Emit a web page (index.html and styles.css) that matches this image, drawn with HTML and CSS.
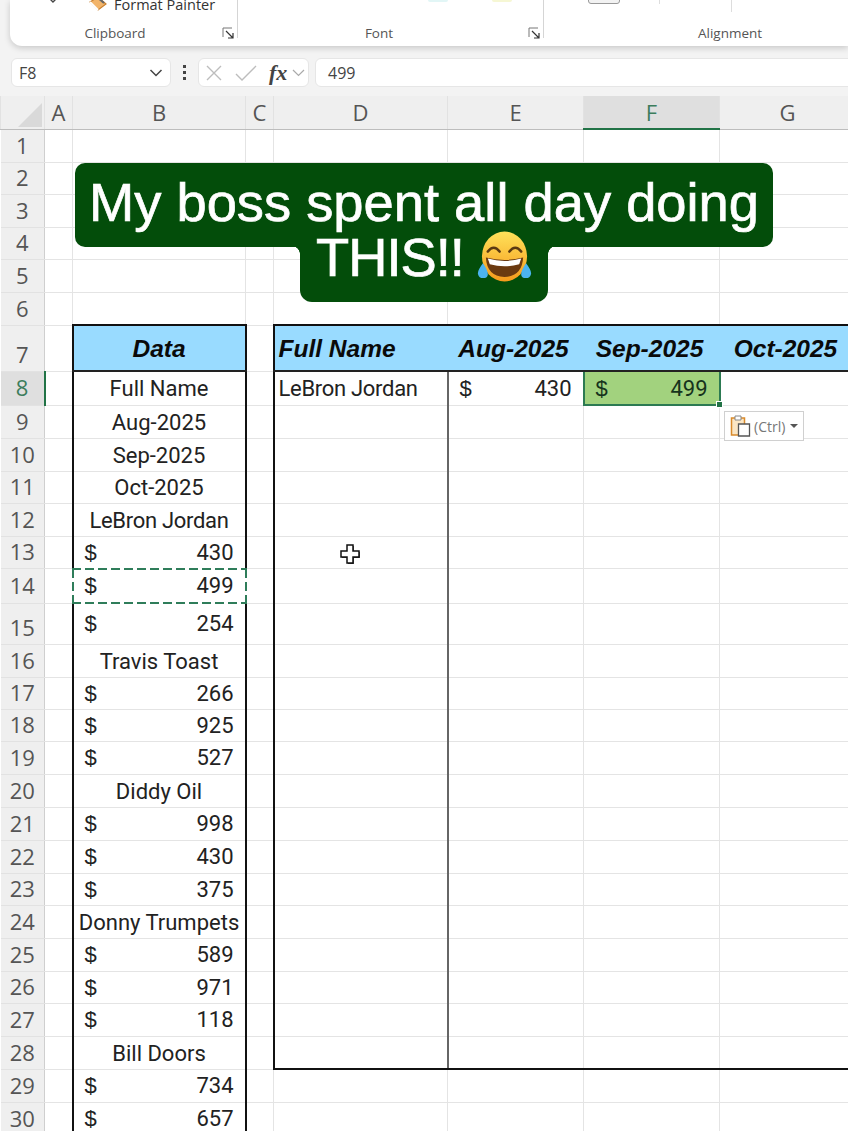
FILE: index.html
```html
<!DOCTYPE html>
<html lang="en">
<head>
    <meta charset="UTF-8">
    <title>Excel - My boss spent all day doing THIS</title>
    <link rel="stylesheet" href="styles.css">
</head>
<body>
    <div class="app">
        <!-- ribbon, top is cut off -->
        <div class="ribbon">
            <div class="group group-clipboard">
                <div class="group-top">
                    <svg class="chevron" width="14" height="8" viewBox="0 0 14 8"><path d="M2 0l5 5 5-5" fill="none" stroke="#444" stroke-width="1.4"/></svg>
                    <svg class="painter" width="22" height="16" viewBox="0 0 22 16"><path d="M3 5l8-5 8 7-8 6z" fill="#f2b46a" stroke="#c9802f" stroke-width="1.2"/><path d="M3 5l8 8" stroke="#fff" stroke-width="2"/><path d="M10 0l7 6" stroke="#666" stroke-width="2"/></svg>
                    <span class="painter-label">Format Painter</span>
                </div>
                <div class="group-label">Clipboard</div>
                <svg class="launcher" width="12" height="12" viewBox="0 0 12 12"><path d="M10 1H1v9" fill="none" stroke="#777"/><path d="M4 4l7 7M11 6v5H6" fill="none" stroke="#333" stroke-width="1.2"/></svg>
            </div>
            <div class="group group-font">
                <div class="group-top">
                    <span class="swatch swatch-blue"></span>
                    <span class="swatch swatch-yellow"></span>
                </div>
                <div class="group-label">Font</div>
                <svg class="launcher" width="12" height="12" viewBox="0 0 12 12"><path d="M10 1H1v9" fill="none" stroke="#777"/><path d="M4 4l7 7M11 6v5H6" fill="none" stroke="#333" stroke-width="1.2"/></svg>
            </div>
            <div class="group group-align">
                <div class="group-top">
                    <span class="mini-btn"></span>
                    <span class="tick tick-one"></span>
                    <span class="tick tick-two"></span>
                </div>
                <div class="group-label">Alignment</div>
            </div>
        </div>

        <!-- formula bar -->
        <div class="formula-bar">
            <div class="box name-box">
                <span>F8</span>
                <svg width="14" height="8" viewBox="0 0 14 8"><path d="M1.5 1l5.5 5.5L12.500 1" fill="none" stroke="#444" stroke-width="1.500"/></svg>
            </div>
            <div class="dots"><i></i><i></i><i></i></div>
            <div class="box fx-box">
                <svg width="18" height="18" viewBox="0 0 18 18"><path d="M2 2l14 14M16 2L2 16" fill="none" stroke="#bdbdbd" stroke-width="1.400"/></svg>
                <svg width="22" height="18" viewBox="0 0 22 18"><path d="M1 10l6 6L21 2" fill="none" stroke="#bdbdbd" stroke-width="1.400"/></svg>
                <span class="fx">fx</span>
                <svg width="13" height="8" viewBox="0 0 13 8"><path d="M1 1l5.500 5.500L12 1" fill="none" stroke="#aaa" stroke-width="1.200"/></svg>
            </div>
            <div class="box value-box">499</div>
        </div>

        <!-- sheet -->
        <div class="sheet">
            <table class="grid">
                <colgroup>
                    <col class="c-row"><col class="c-a"><col class="c-b"><col class="c-c"><col class="c-d"><col class="c-e"><col class="c-f"><col class="c-g">
                </colgroup>
                <thead>
                    <tr class="h33">
                        <th class="corner"><svg width="28" height="28" viewBox="0 0 28 28"><path d="M26 2v24H2z" fill="#d9d9d9"/></svg></th>
                        <th>A</th><th>B</th><th>C</th><th>D</th><th>E</th><th class="col-on">F</th><th>G</th>
                    </tr>
                </thead>
                <tbody>
                    <tr class="h33"><th>1</th><td></td><td></td><td></td><td></td><td></td><td></td><td></td></tr>
                    <tr class="h32"><th>2</th><td></td><td></td><td></td><td></td><td></td><td></td><td></td></tr>
                    <tr class="h33"><th>3</th><td></td><td></td><td></td><td></td><td></td><td></td><td></td></tr>
                    <tr class="h32"><th>4</th><td></td><td></td><td></td><td></td><td></td><td></td><td></td></tr>
                    <tr class="h33"><th>5</th><td></td><td></td><td></td><td></td><td></td><td></td><td></td></tr>
                    <tr class="h33"><th>6</th><td></td><td></td><td></td><td></td><td></td><td></td><td></td></tr>
                    <tr class="h46 head-row">
                        <th class="low">7</th><td></td>
                        <td class="hd hd-data">Data</td><td></td>
                        <td class="hd hd-first">Full Name</td>
                        <td class="hd">Aug-2025</td>
                        <td class="hd">Sep-2025</td>
                        <td class="hd hd-last">Oct-2025</td>
                    </tr>
                    <tr class="h34">
                        <th class="row-on">8</th><td></td>
                        <td class="data">Full Name</td><td></td>
                        <td class="t-d tight">LeBron Jordan</td>
                        <td class="t-e"><div class="money"><span>$</span><span>430</span></div></td>
                        <td class="sel"><div class="money"><span>$</span><span>499</span></div><span class="handle"></span></td>
                        <td class="t-g"></td>
                    </tr>
                    <tr class="h33"><th>9</th><td></td><td class="data">Aug-2025</td><td></td><td class="t-d"></td><td></td><td></td><td class="t-g"></td></tr>
                    <tr class="h33"><th>10</th><td></td><td class="data">Sep-2025</td><td></td><td class="t-d"></td><td></td><td></td><td class="t-g"></td></tr>
                    <tr class="h32"><th>11</th><td></td><td class="data">Oct-2025</td><td></td><td class="t-d"></td><td></td><td></td><td class="t-g"></td></tr>
                    <tr class="h33"><th>12</th><td></td><td class="data tight">LeBron Jordan</td><td></td><td class="t-d"></td><td></td><td></td><td class="t-g"></td></tr>
                    <tr class="h32"><th>13</th><td></td><td class="data"><div class="money"><span>$</span><span>430</span></div></td><td></td><td class="t-d"></td><td></td><td></td><td class="t-g"></td></tr>
                    <tr class="h35"><th>14</th><td></td><td class="data ants"><div class="money"><span>$</span><span>499</span></div></td><td></td><td class="t-d"></td><td></td><td></td><td class="t-g"></td></tr>
                    <tr class="h41"><th class="low">15</th><td></td><td class="data"><div class="money"><span>$</span><span>254</span></div></td><td></td><td class="t-d"></td><td></td><td></td><td class="t-g"></td></tr>
                    <tr class="h33"><th>16</th><td></td><td class="data">Travis Toast</td><td></td><td class="t-d"></td><td></td><td></td><td class="t-g"></td></tr>
                    <tr class="h32"><th>17</th><td></td><td class="data"><div class="money"><span>$</span><span>266</span></div></td><td></td><td class="t-d"></td><td></td><td></td><td class="t-g"></td></tr>
                    <tr class="h32"><th>18</th><td></td><td class="data"><div class="money"><span>$</span><span>925</span></div></td><td></td><td class="t-d"></td><td></td><td></td><td class="t-g"></td></tr>
                    <tr class="h33"><th>19</th><td></td><td class="data"><div class="money"><span>$</span><span>527</span></div></td><td></td><td class="t-d"></td><td></td><td></td><td class="t-g"></td></tr>
                    <tr class="h33"><th>20</th><td></td><td class="data">Diddy Oil</td><td></td><td class="t-d"></td><td></td><td></td><td class="t-g"></td></tr>
                    <tr class="h33"><th>21</th><td></td><td class="data"><div class="money"><span>$</span><span>998</span></div></td><td></td><td class="t-d"></td><td></td><td></td><td class="t-g"></td></tr>
                    <tr class="h33"><th>22</th><td></td><td class="data"><div class="money"><span>$</span><span>430</span></div></td><td></td><td class="t-d"></td><td></td><td></td><td class="t-g"></td></tr>
                    <tr class="h32"><th>23</th><td></td><td class="data"><div class="money"><span>$</span><span>375</span></div></td><td></td><td class="t-d"></td><td></td><td></td><td class="t-g"></td></tr>
                    <tr class="h33"><th>24</th><td></td><td class="data">Donny Trumpets</td><td></td><td class="t-d"></td><td></td><td></td><td class="t-g"></td></tr>
                    <tr class="h33"><th>25</th><td></td><td class="data"><div class="money"><span>$</span><span>589</span></div></td><td></td><td class="t-d"></td><td></td><td></td><td class="t-g"></td></tr>
                    <tr class="h32"><th>26</th><td></td><td class="data"><div class="money"><span>$</span><span>971</span></div></td><td></td><td class="t-d"></td><td></td><td></td><td class="t-g"></td></tr>
                    <tr class="h33"><th>27</th><td></td><td class="data"><div class="money"><span>$</span><span>118</span></div></td><td></td><td class="t-d"></td><td></td><td></td><td class="t-g"></td></tr>
                    <tr class="h33 last-row"><th>28</th><td></td><td class="data">Bill Doors</td><td></td><td class="t-d"></td><td></td><td></td><td class="t-g"></td></tr>
                    <tr class="h33"><th>29</th><td></td><td class="data"><div class="money"><span>$</span><span>734</span></div></td><td></td><td></td><td></td><td></td><td></td></tr>
                    <tr class="h33"><th>30</th><td></td><td class="data"><div class="money"><span>$</span><span>657</span></div></td><td></td><td></td><td></td><td></td><td></td></tr>
                </tbody>
            </table>

            <!-- things floating over the grid -->
            <div class="caption">
                <div class="cap-line cap-one">My boss spent all day doing</div>
                <div class="cap-line cap-two"><span class="cap-word">THIS!!</span>
                    <svg class="emoji" width="55" height="51" viewBox="0 0 56 52">
                        <defs>
                            <linearGradient id="face" x1="0" y1="0" x2="0" y2="1">
                                <stop offset="0" stop-color="#ffe25a"/>
                                <stop offset="1" stop-color="#f59a1c"/>
                            </linearGradient>
                        </defs>
                        <ellipse cx="28" cy="26" rx="23" ry="25.500" fill="url(#face)"/>
                        <path d="M11 21q6-8 12 0M33 21q6-8 12 0" fill="none" stroke="#5b3a12" stroke-width="2.600" stroke-linecap="round"/>
                        <path d="M9 27q19 5 38 0q-1 19-19 20q-18-1-19-20z" fill="#6b3a10"/>
                        <path d="M11 28q17 5 34 0l-2 6q-15 4-30 0z" fill="#fff"/>
                        <path d="M6 33q-6 8-5 11q1 4 5 4q5 0 5-4q0-4-5-11zM50 33q6 8 5 11q-1 4-5 4q-5 0-5-4q0-4 5-11z" fill="#4cb4ee"/>
                    </svg>
                </div>
            </div>

            <div class="paste-tag">
                <svg width="22" height="24" viewBox="0 0 22 24"><path d="M1.500 4h13v17h-13z" fill="#fbe6c4" stroke="#d98a2b" stroke-width="1.500"/><path d="M5 2h6v4H5z" fill="#fff" stroke="#888"/><path d="M8.500 10h11v12h-11z" fill="#fff" stroke="#555" stroke-width="1.300"/></svg>
                <span>(Ctrl)</span>
                <i class="caret"></i>
            </div>

            <svg class="cursor" width="24" height="24" viewBox="0 0 24 24"><path d="M9 3h6v6h6v6h-6v6H9v-6H3V9h6z" fill="#333" transform="translate(.8 1)"/><path d="M9 3h6v6h6v6h-6v6H9v-6H3V9h6z" fill="#fff" stroke="#111" stroke-width="1.500"/></svg>
        </div>
    </div>
</body>
</html>
```
FILE: styles.css
```css
* {
    box-sizing: border-box;
}
body {
    margin: 0;
    background-color: #f3f3f3;
    font-family: "Open Sans", "Noto Sans", sans-serif;
    color: #222;
}
.app {
    width: 848px;
    height: 1131px;
    overflow: hidden;
}

/* ribbon */
.ribbon {
    display: flex;
    height: 46px;
    margin-left: 10px;
    padding-bottom: 8px;
    background-color: #fff;
    border-bottom-left-radius: 12px;
    box-shadow: 0 2px 6px rgba(0, 0, 0, 0.18);
}
.group {
    position: relative;
    display: flex;
    flex-direction: column;
    border-right: 1px solid #d5d5d5;
}
.group-clipboard {
    width: 228px;
}
.group-font {
    width: 306px;
}
.group-align {
    flex: 1;
    border-right: none;
}
.group-top {
    position: relative;
    flex: none;
    height: 25px;
}
.group-label {
    flex: none;
    font-size: 13.5px;
    line-height: 16px;
    color: #555;
    text-align: center;
}
.group-clipboard .group-label {
    margin-left: -17px;
}
.group-font .group-label {
    margin-right: 23px;
}
.group-align .group-label {
    text-align: left;
    padding-left: 154px;
}
.chevron {
    position: absolute;
    left: 36px;
    top: -3px;
}
.painter {
    position: absolute;
    left: 77px;
    top: -3px;
}
.painter-label {
    position: absolute;
    left: 104px;
    top: -5px;
    font-size: 14.5px;
    line-height: 20px;
    color: #333;
    white-space: nowrap;
}
.launcher {
    position: absolute;
    right: 3px;
    bottom: -1px;
}
.swatch {
    position: absolute;
    top: -2px;
    width: 20px;
    height: 4px;
    border-radius: 3px;
}
.swatch-blue {
    left: 190px;
    background-color: #e2f6f6;
}
.swatch-yellow {
    left: 254px;
    background-color: #f6f7d4;
}
.mini-btn {
    position: absolute;
    left: 44px;
    top: -6px;
    width: 32px;
    height: 10px;
    border: 1px solid #999;
    border-radius: 3px;
    background-color: #f2f2f2;
}
.tick {
    position: absolute;
    top: 0;
    width: 1px;
    height: 12px;
    background-color: #ddd;
}
.tick-one {
    left: 115px;
    height: 4px;
}
.tick-two {
    left: 187px;
}

/* formula bar */
.formula-bar {
    display: flex;
    align-items: center;
    gap: 6px;
    height: 50px;
    padding: 12px 0 9px 11px;
}
.box {
    display: flex;
    align-items: center;
    height: 29px;
    background-color: #fff;
    border: 1px solid #e6e6e6;
    border-radius: 6px;
    font-size: 16px;
    color: #444;
}
.name-box {
    justify-content: space-between;
    width: 160px;
    padding: 0 7px 0 7px;
}
.dots {
    display: flex;
    flex-direction: column;
    gap: 3px;
    width: 15px;
    align-items: center;
}
.dots i {
    width: 3px;
    height: 3px;
    background-color: #444;
}
.fx-box {
    width: 111px;
    gap: 12px;
    padding-left: 6px;
}
.fx {
    font-family: "Liberation Serif", serif;
    font-style: italic;
    font-weight: bold;
    font-size: 22px;
    line-height: 22px;
    color: #444;
}
.fx-box svg:last-child {
    margin-left: -7px;
}
.value-box {
    flex: 1;
    margin-right: -10px;
    padding-left: 12px;
}

/* sheet */
.sheet {
    position: relative;
    height: 1035px;
    background-color: #fff;
    overflow: hidden;
}
.grid {
    table-layout: fixed;
    border-collapse: collapse;
    width: 855px;
    font-family: "Roboto", "Noto Sans", sans-serif;
    font-size: 22px;
    color: #222;
}
.c-row { width: 44px; }
.c-a { width: 28px; }
.c-b { width: 173px; }
.c-c { width: 28px; }
.c-d { width: 174px; }
.c-e { width: 136px; }
.c-f { width: 136px; }
.c-g { width: 136px; }

.h32 { height: 32px; }
.h33 { height: 33px; }
.h34 { height: 34px; }
.h35 { height: 35px; }
.h41 { height: 41px; }
.h46 { height: 46px; }

th {
    padding: 0;
    background-color: #efefef;
    border: 1px solid #e2e2e2;
    font-family: "Open Sans", "Noto Sans", sans-serif;
    font-weight: 400;
    font-size: 22px;
    line-height: 1;
    color: #555;
}
thead th {
    border-bottom: 1px solid #bdbdbd;
    border-top: none;
}
tbody th {
    border-left: none;
    border-right: 1px solid #cfcfcf;
    padding-bottom: 2px;
}
tbody th.low {
    vertical-align: bottom;
    padding-bottom: 6px;
}
th.corner {
    vertical-align: bottom;
    text-align: right;
    font-size: 0;
}
th.col-on {
    background-color: #dfdfdf;
    border-bottom: 2px solid #217346;
    color: #3c7d5c;
}
tbody th.row-on {
    background-color: #dfdfdf;
    border-right: 2px solid #217346;
    color: #3c7d5c;
}
td {
    padding: 1px 0 0;
    border: 1px solid #e4e4e4;
    white-space: nowrap;
    overflow: hidden;
}
.data {
    text-align: center;
    border-left: 2px solid #111;
    border-right: 2px solid #111;
}
.tight {
    letter-spacing: -0.3px;
}
.money {
    display: flex;
    justify-content: space-between;
    padding: 0 11px;
}
.money span:first-child {
    font-family: "Liberation Sans", sans-serif;
}
.hd {
    background-color: #99dbff;
    border-top: 2px solid #111;
    border-bottom: 2px solid #222;
    border-left: none;
    border-right: none;
    padding: 2px 4px 0 0;
    font-family: "Liberation Sans", sans-serif;
    font-weight: bold;
    font-style: italic;
    font-size: 24.5px;
    color: #0a0a0a;
    text-align: center;
}
.hd-data {
    padding-right: 0;
    border-left: 2px solid #111;
    border-right: 2px solid #111;
}
.hd-first {
    border-left: 2px solid #111;
    text-align: left;
    padding-left: 4px;
}
.t-d {
    border-left: 2px solid #111;
    border-right: 2px solid #666;
    padding-left: 4px;
}
.last-row .t-d,
.last-row .t-g,
.last-row td:nth-child(6),
.last-row td:nth-child(7) {
    border-bottom: 2px solid #111;
}
.sel {
    position: relative;
    overflow: visible;
    background-color: #a2d27e;
    border: 2px solid #2c7a52;
    color: #16331c;
}
.handle {
    position: absolute;
    right: -4px;
    bottom: -4px;
    width: 7px;
    height: 7px;
    background-color: #217346;
    border: 1px solid #fff;
}
.ants {
    position: relative;
    overflow: visible;
}
.ants::before,
.ants::after {
    content: "";
    position: absolute;
    inset: -1px -2px;
    pointer-events: none;
}
.ants::before {
    border: 2px solid #fff;
}
/* longer dashes than border: dashed gives */
.ants::after {
    background:
        repeating-linear-gradient(90deg, #2f7d5a 0 9px, transparent 9px 13px) top / 100% 2px no-repeat,
        repeating-linear-gradient(90deg, #2f7d5a 0 9px, transparent 9px 13px) bottom / 100% 2px no-repeat,
        repeating-linear-gradient(0deg, #2f7d5a 0 9px, transparent 9px 13px) left / 2px 100% no-repeat,
        repeating-linear-gradient(0deg, #2f7d5a 0 9px, transparent 9px 13px) right / 2px 100% no-repeat;
}

/* overlays */
.caption {
    position: absolute;
    left: 75px;
    top: 67px;
    width: 698px;
    display: flex;
    flex-direction: column;
    align-items: center;
    font-family: "Liberation Sans", sans-serif;
    font-size: 54.3px;
    color: #fff;
    -webkit-text-stroke: 0.7px #fff;
    white-space: nowrap;
}
.cap-line {
    background-color: #034d0a;
}
.cap-one {
    width: 698px;
    height: 84px;
    padding-top: 7px;
    border-radius: 10px;
    line-height: 66px;
    text-align: center;
}
.cap-two {
    position: relative;
    display: flex;
    align-items: flex-start;
    gap: 13px;
    justify-content: center;
    width: 248px;
    height: 56px;
    border-radius: 0 0 12px 12px;
    margin-top: -1px;
}
.cap-word {
    margin-top: -9px;
    line-height: 42px;
    letter-spacing: -1px;
}
.emoji {
    margin-top: -15px;
}
/* small inverted corners where the two lines meet */
.cap-two::before,
.cap-two::after {
    content: "";
    position: absolute;
    top: 0;
    width: 8px;
    height: 8px;
}
.cap-two::before {
    left: -8px;
    background: radial-gradient(circle at 0 100%, transparent 7.500px, #034d0a 8px);
}
.cap-two::after {
    right: -8px;
    background: radial-gradient(circle at 100% 100%, transparent 7.500px, #034d0a 8px);
}
.paste-tag {
    position: absolute;
    left: 724px;
    top: 315px;
    display: flex;
    align-items: center;
    gap: 2px;
    width: 80px;
    height: 30px;
    padding-left: 5px;
    background-color: #fff;
    border: 1px solid #d0d0d0;
    font-size: 14px;
    color: #777;
}
.caret {
    margin-left: 3px;
    border-left: 4px solid transparent;
    border-right: 4px solid transparent;
    border-top: 4px solid #555;
}
.cursor {
    position: absolute;
    left: 338px;
    top: 446px;
}
```
